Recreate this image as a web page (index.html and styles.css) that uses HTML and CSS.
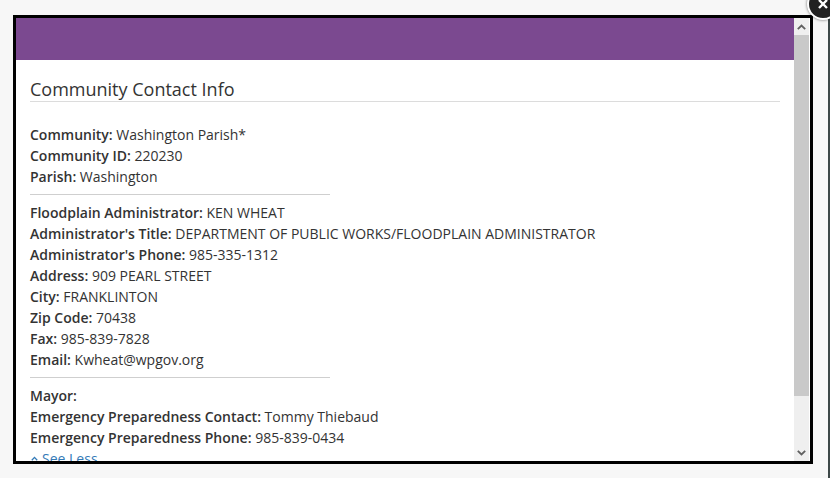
FILE: index.html
```html
<!DOCTYPE html>
<html lang="en">
<head>
<meta charset="utf-8">
<title>Community Contact Info</title>
<link rel="stylesheet" href="styles.css">
</head>
<body>
<div class="modal">
  <div class="pane">
    <div class="banner"></div>
    <div class="content">
      <h2 class="title">Community Contact Info</h2>
      <div class="group">
        <div class="row"><b>Community:</b> Washington Parish*</div>
        <div class="row"><b>Community ID:</b> 220230</div>
        <div class="row"><b>Parish:</b> Washington</div>
      </div>
      <hr class="sep">
      <div class="group">
        <div class="row"><b>Floodplain Administrator:</b> KEN WHEAT</div>
        <div class="row"><b>Administrator's Title:</b> DEPARTMENT OF PUBLIC WORKS/FLOODPLAIN ADMINISTRATOR</div>
        <div class="row"><b>Administrator's Phone:</b> 985-335-1312</div>
        <div class="row"><b>Address:</b> 909 PEARL STREET</div>
        <div class="row"><b>City:</b> FRANKLINTON</div>
        <div class="row"><b>Zip Code:</b> 70438</div>
        <div class="row"><b>Fax:</b> 985-839-7828</div>
        <div class="row"><b>Email:</b> Kwheat@wpgov.org</div>
      </div>
      <hr class="sep">
      <div class="group">
        <div class="row"><b>Mayor:</b></div>
        <div class="row"><b>Emergency Preparedness Contact:</b> Tommy Thiebaud</div>
        <div class="row"><b>Emergency Preparedness Phone:</b> 985-839-0434</div>
        <a class="row toggle" href="#"><svg class="chev" width="7" height="5" viewBox="0 0 7 5"><path d="M0.8 4.2 L3.5 1.4 L6.2 4.2" fill="none" stroke="#337ab7" stroke-width="1.3"/></svg>See Less</a>
      </div>
    </div>
  </div>
  <div class="scrollbar">
    <div class="sb-btn"><svg width="9" height="6" viewBox="0 0 9 6"><path d="M0.8 5.2 L4.5 1.5 L8.2 5.2" fill="none" stroke="#606060" stroke-width="1.8"/></svg></div>
    <div class="sb-track"><div class="sb-thumb"></div></div>
    <div class="sb-btn"><svg width="9" height="6" viewBox="0 0 9 6"><path d="M0.8 0.8 L4.5 4.5 L8.2 0.8" fill="none" stroke="#606060" stroke-width="1.8"/></svg></div>
  </div>
  <div class="close"><svg width="12" height="12" viewBox="0 0 12 12"><path d="M2 2 L10 10 M10 2 L2 10" stroke="#fff" stroke-width="2.4"/></svg></div>
</div>
</body>
</html>
```
FILE: styles.css
```css
html, body {
  margin: 0;
  padding: 0;
}
body {
  width: 830px;
  height: 478px;
  overflow: hidden;
  background: #f7f7f7 linear-gradient(to left, #3d4848 2px, transparent 2px) no-repeat 0 18px / 100% 460px;
  font-family: "Open Sans", "Liberation Sans", sans-serif;
  color: #333;
  box-sizing: border-box;
  padding: 15px 0 0 13px;
}
.modal {
  position: relative;
  width: 800px;
  height: 449px;
  box-sizing: border-box;
  border: 3px solid #000;
  background: #fff;
  display: flex;
}
.pane {
  flex: 1;
  overflow: hidden;
  display: flex;
  flex-direction: column;
}
.banner {
  height: 42px;
  flex: none;
  background: #7b4990;
}
.content {
  padding: 0 14px;
}
.title {
  margin: 17px 0 22px;
  font-size: 18px;
  line-height: 24px;
  font-weight: 400;
  color: #333;
  border-bottom: 1px solid #dcdcdc;
}
.row {
  display: block;
  font-size: 14px;
  line-height: 21px;
  white-space: nowrap;
}
.row b {
  font-weight: 600;
}
.sep {
  width: 300px;
  margin: 7px 0;
  border: 0;
  height: 1px;
  background: #cfcfcf;
  margin-left: 0;
}
.toggle {
  color: #337ab7;
  text-decoration: none;
  display: flex;
  align-items: center;
  gap: 4px;
  padding-left: 1px;
}
.chev {
  flex: none;
}
.scrollbar {
  width: 15px;
  margin-right: 1px;
  flex: none;
  display: flex;
  flex-direction: column;
  background: #efefef;
}
.sb-btn {
  height: 17px;
  flex: none;
  display: flex;
  align-items: center;
  justify-content: center;
}
.sb-track {
  flex: 1;
  display: flex;
  flex-direction: column;
}
.sb-thumb {
  height: 361px;
  background: #c9c9c9;
}
.close {
  position: absolute;
  right: -29px;
  top: -30px;
  width: 28px;
  height: 28px;
  border-radius: 50%;
  background: #222;
  border: 2px solid #fff;
  box-shadow: 0 0 3px rgba(0,0,0,0.6);
  display: flex;
  align-items: center;
  justify-content: center;
}
```
